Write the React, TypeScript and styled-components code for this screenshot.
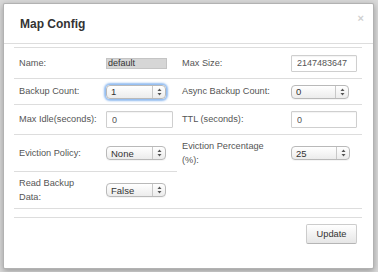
import styled, { createGlobalStyle } from "styled-components";

const GlobalStyle = createGlobalStyle`
  html, body {
    margin: 0;
    padding: 0;
    background: #d9d9d9;
    font-family: "Liberation Sans", Arial, sans-serif;
  }
`;

const Backdrop = styled.div`
  width: 378px;
  height: 272px;
  box-sizing: border-box;
  padding: 3px 0 0 3px;
  background-color: #d9d9d9;
`;

const Modal = styled.div`
  width: 371px;
  height: 266px;
  box-sizing: border-box;
  background: #fff;
  border: 1px solid rgba(0, 0, 0, 0.3);
  border-radius: 2px;
  box-shadow: 0 2px 6px rgba(0, 0, 0, 0.3);
  display: flex;
  flex-direction: column;
`;

const Header = styled.div`
  height: 39px;
  flex: none;
  display: flex;
  align-items: center;
  justify-content: space-between;
  padding: 0 9px 0 16px;
  border-bottom: 1px solid #ddd;
`;

const Title = styled.h3`
  margin: 0;
  font-size: 12px;
  font-weight: bold;
  color: #333;
`;

const Close = styled.span`
  align-self: flex-start;
  margin-top: 9px;
  font-size: 11px;
  line-height: 11px;
  font-weight: bold;
  color: #d0d0d0;
`;

const Body = styled.div`
  padding: 3px 11px 0 10px;
`;

const Grid = styled.div`
  display: grid;
  grid-template-columns: 87px 76px 109px 76px;
  grid-template-rows: 31px 26px 30px 37px 37px 9px;
  border-bottom: 1px solid #ddd;
`;

const Cell = styled.div<{ $border?: boolean; $span?: number }>`
  box-sizing: border-box;
  display: flex;
  align-items: center;
  padding: 0 5px;
  border-top: ${(p) => (p.$border === false ? "none" : "1px solid #ddd")};
  grid-column: ${(p) => (p.$span ? `span ${p.$span}` : "auto")};
`;

const Label = styled.span`
  font-size: 9.2px;
  line-height: 14.5px;
  color: #555;
  white-space: nowrap;
`;

const TextInput = styled.input<{ $w: number }>`
  box-sizing: border-box;
  width: ${(p) => p.$w}px;
  height: 17px;
  margin: 0;
  padding: 0 5px;
  border: 1px solid #cfcfcf;
  border-radius: 1px;
  box-shadow: inset 0 1px 1px rgba(0, 0, 0, 0.05);
  font-family: inherit;
  font-size: 9px;
  color: #555;
  background: #fff;
  outline: none;
`;

const ReadOnly = styled.input`
  box-sizing: border-box;
  width: 61px;
  height: 11px;
  margin: 0;
  padding: 0 1px;
  border: 1px solid #c4c4c4;
  background: #d6d6d6;
  font-family: inherit;
  font-size: 9px;
  color: #333;
  outline: none;
`;

const SelectBox = styled.div<{ $w: number; $focus?: boolean }>`
  box-sizing: border-box;
  width: ${(p) => p.$w}px;
  height: 14px;
  display: flex;
  align-items: stretch;
  border: 1px solid #b9b9b9;
  border-radius: 4px;
  background: linear-gradient(#ffffff, #ececec);
  box-shadow: ${(p) =>
    p.$focus
      ? "0 0 2px 2px rgba(110, 165, 235, 0.75)"
      : "0 1px 0 rgba(0, 0, 0, 0.04)"};
`;

const NativeSelect = styled.select`
  flex: 1;
  min-width: 0;
  appearance: none;
  -webkit-appearance: none;
  border: none;
  background: transparent;
  margin: 0;
  padding: 0 0 0 4px;
  font-family: inherit;
  font-size: 9.5px;
  color: #333;
  outline: none;
`;

const Arrows = styled.span`
  width: 12px;
  flex: none;
  display: flex;
  align-items: center;
  justify-content: center;
  border-left: 1px solid #c8c8c8;
`;

const Footer = styled.div`
  display: flex;
  justify-content: flex-end;
  padding: 6px 16px 0 0;
`;

const Button = styled.button`
  box-sizing: border-box;
  width: 51px;
  height: 20px;
  padding: 0;
  border: 1px solid #cccccc;
  border-bottom-color: #b5b5b5;
  border-radius: 2px;
  background: linear-gradient(#ffffff, #e6e6e6);
  font-family: inherit;
  font-size: 9.3px;
  color: #333;
  cursor: pointer;
`;

type SelectProps = { w: number; value: string; options: string[]; focus?: boolean };

function Select({ w, value, options, focus }: SelectProps) {
  return (
    <SelectBox $w={w} $focus={focus}>
      <NativeSelect defaultValue={value}>
        {options.map((o) => (
          <option key={o}>{o}</option>
        ))}
      </NativeSelect>
      <Arrows>
        <svg width="5" height="8" viewBox="0 0 5 8">
          <path d="M2.5 0.5 L4.5 3 L0.5 3 Z" fill="#555" />
          <path d="M2.5 7.5 L4.5 5 L0.5 5 Z" fill="#555" />
        </svg>
      </Arrows>
    </SelectBox>
  );
}

export default function App() {
  return (
    <>
      <GlobalStyle />
      <Backdrop>
        <Modal>
          <Header>
            <Title>Map Config</Title>
            <Close>×</Close>
          </Header>
          <Body>
            <Grid>
              <Cell><Label>Name:</Label></Cell>
              <Cell><ReadOnly readOnly defaultValue="default" /></Cell>
              <Cell><Label>Max Size:</Label></Cell>
              <Cell><TextInput $w={66} defaultValue="2147483647" /></Cell>

              <Cell><Label>Backup Count:</Label></Cell>
              <Cell><Select w={60} value="1" options={["0", "1", "2", "3"]} focus /></Cell>
              <Cell><Label>Async Backup Count:</Label></Cell>
              <Cell><Select w={58} value="0" options={["0", "1", "2", "3"]} /></Cell>

              <Cell><Label>Max Idle(seconds):</Label></Cell>
              <Cell><TextInput $w={67} defaultValue="0" /></Cell>
              <Cell><Label>TTL (seconds):</Label></Cell>
              <Cell><TextInput $w={66} defaultValue="0" /></Cell>

              <Cell><Label>Eviction Policy:</Label></Cell>
              <Cell><Select w={60} value="None" options={["None", "LRU", "LFU"]} /></Cell>
              <Cell>
                <Label>
                  Eviction Percentage
                  <br />
                  (%):
                </Label>
              </Cell>
              <Cell><Select w={59} value="25" options={["10", "25", "50"]} /></Cell>

              <Cell>
                <Label>
                  Read Backup
                  <br />
                  Data:
                </Label>
              </Cell>
              <Cell><Select w={60} value="False" options={["True", "False"]} /></Cell>
              <Cell $border={false} $span={2} />

              <Cell $span={4} />
            </Grid>
          </Body>
          <Footer>
            <Button>Update</Button>
          </Footer>
        </Modal>
      </Backdrop>
    </>
  );
}
